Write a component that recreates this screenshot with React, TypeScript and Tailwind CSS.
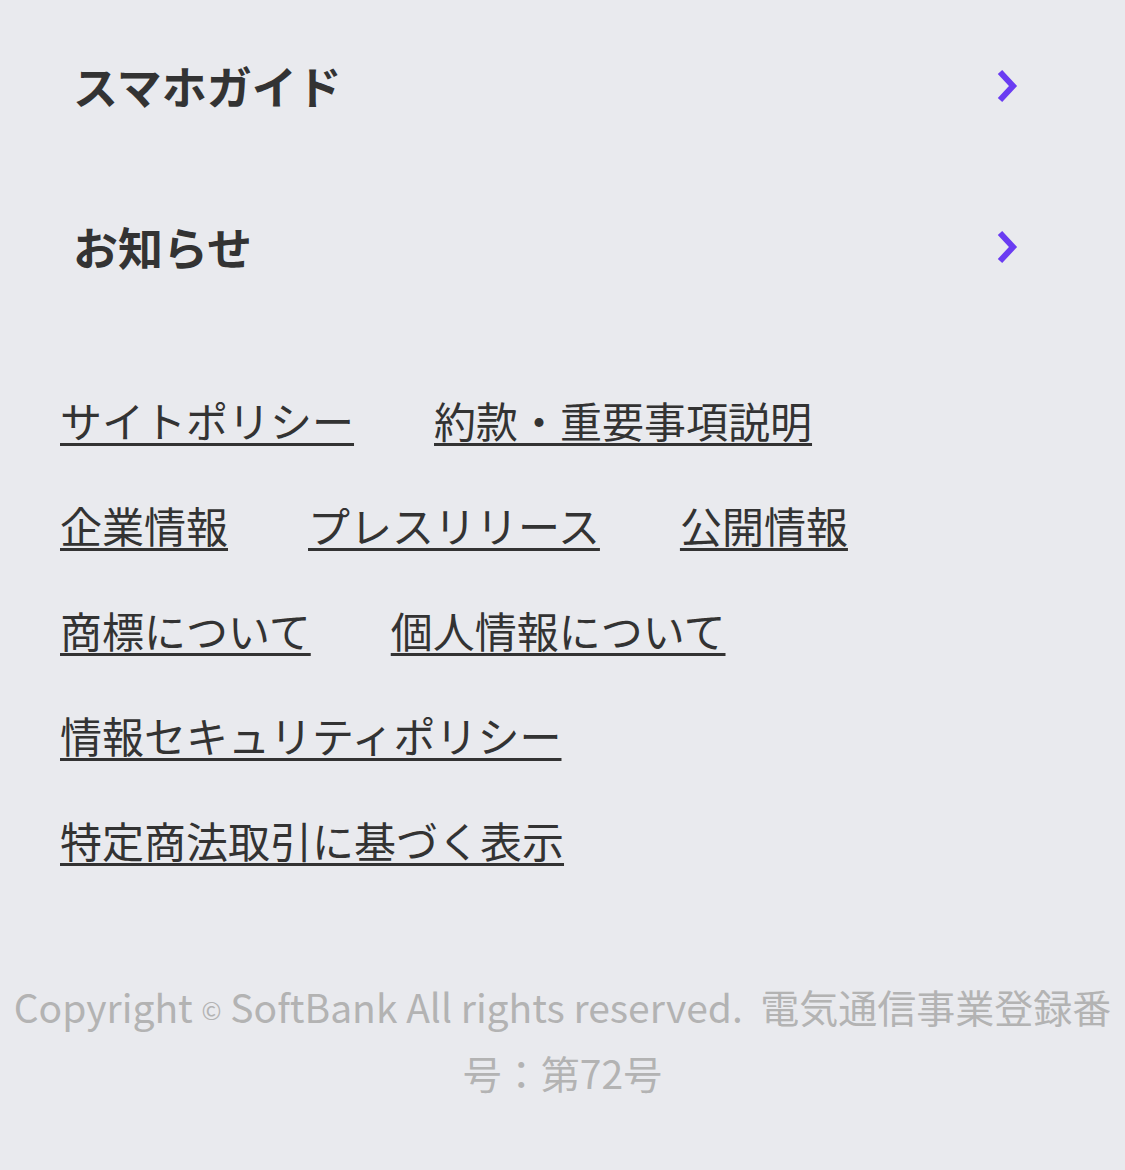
const links: string[] = [
  "サイトポリシー",
  "約款・重要事項説明",
  "企業情報",
  "プレスリリース",
  "公開情報",
  "商標について",
  "個人情報について",
  "情報セキュリティポリシー",
  "特定商法取引に基づく表示",
];

function Chevron() {
  return (
    <svg width="26" height="38" viewBox="0 0 26 38" fill="none">
      <polyline
        points="5,5 18,19 5,33"
        stroke="#6a3cf2"
        strokeWidth="6"
        strokeLinecap="butt"
        strokeLinejoin="miter"
      />
    </svg>
  );
}

function MenuRow({ label }: { label: string }) {
  return (
    <a href="#" className="flex h-[161px] items-center justify-between pl-[73px] pr-[104px]">
      <span className="text-[45px] font-bold text-[#333333]">{label}</span>
      <Chevron />
    </a>
  );
}

export default function App() {
  return (
    <div
      className="min-h-[1170px] w-full bg-[#e9eaee] pt-[5px]"
      style={{ fontFamily: '"Noto Sans CJK JP", "Noto Sans", sans-serif' }}
    >
      <MenuRow label="スマホガイド" />
      <MenuRow label="お知らせ" />

      <ul className="mt-[40px] flex flex-wrap gap-x-[80px] pl-[60px] pr-[108px]">
        {links.map((l) => (
          <li key={l} className="h-[105px] text-[42px] leading-[105px]">
            <a
              href="#"
              className="text-[#333333] underline decoration-[3px] underline-offset-[5px]"
            >
              {l}
            </a>
          </li>
        ))}
      </ul>

      <p className="mt-[81px] px-[10px] text-center text-[39px] leading-[66px] text-[#b3b3b3]">
        Copyright <span className="align-[3px] text-[24px] leading-none">©</span> SoftBank All
        rights reserved.&nbsp; 電気通信事業登録番号：第72号
      </p>
    </div>
  );
}
